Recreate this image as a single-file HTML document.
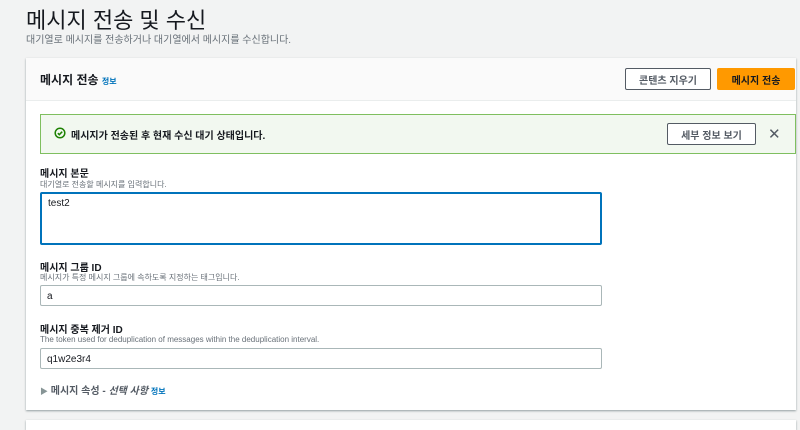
<!DOCTYPE html>
<html><head><meta charset="utf-8"><style>
*{box-sizing:border-box;margin:0;padding:0}
body{width:800px;height:425px;overflow:hidden;background:#f2f3f3;font-family:"Liberation Sans","Noto Sans CJK KR",sans-serif;color:#16191f;position:relative}
.a{position:absolute}
h1{position:absolute;left:26px;top:3px;font-size:22px;font-weight:400;color:#16191f}
.sub{left:26px;top:31px;font-size:10px;color:#687078}
.card{left:26px;top:58px;width:770px;height:352px;background:#fff;box-shadow:0 1px 2px rgba(0,28,36,.4)}
.hdr{left:26px;top:58px;width:770px;height:43px;background:#fafafa;border-bottom:1px solid #eaeded}
.btn{position:absolute;height:22px;font-size:10px;font-weight:700;display:flex;align-items:center;justify-content:center;border:1px solid #545b64;background:#fff;color:#545b64;border-radius:2px}
.lbl{position:absolute;left:40px;font-size:10px;font-weight:700;color:#16191f}
.desc{position:absolute;left:40px;font-size:8px;color:#687078}
.inp{position:absolute;left:40px;width:562px;height:21px;border:1px solid #aab7b8;border-radius:2px;font-size:10px;padding:3px 6px;color:#16191f}
.info{color:#0073bb;font-size:8px;font-weight:700}
</style></head><body>
<h1>메시지 전송 및 수신</h1>
<div class="a sub">대기열로 메시지를 전송하거나 대기열에서 메시지를 수신합니다.</div>
<div class="a card"></div>
<div class="a hdr"></div>
<div class="a" style="left:40px;top:71px;font-size:12px;font-weight:700">메시지 전송 <span class="info">정보</span></div>
<div class="btn" style="left:625px;top:68px;width:86px">콘텐츠 지우기</div>
<div class="btn" style="left:717px;top:68px;width:78px;background:#ff9900;border-color:#ff9900;color:#16191f">메시지 전송</div>
<div class="a" style="left:40px;top:114px;width:756px;height:40px;background:#f2f8f0;border:1px solid #7fbf5f"></div>
<svg class="a" style="left:54px;top:127px" width="12" height="12" viewBox="0 0 12 12"><circle cx="6" cy="6" r="4.8" fill="none" stroke="#1d8102" stroke-width="1.5"/><path d="M3.8 6.2l1.5 1.5 2.9-3" fill="none" stroke="#1d8102" stroke-width="1.5"/></svg>
<div class="a" style="left:71px;top:127px;font-size:10px;font-weight:700">메시지가 전송된 후 현재 수신 대기 상태입니다.</div>
<div class="btn" style="left:667px;top:123px;width:89px">세부 정보 보기</div>
<div class="a" style="left:768px;top:125px;font-size:15px;color:#545b64">✕</div>
<div class="lbl" style="top:165px">메시지 본문</div>
<div class="desc" style="top:179px">대기열로 전송할 메시지를 입력합니다.</div>
<div class="inp" style="top:192px;height:53px;border:2px solid #0073bb;padding:4px 6px">test2</div>
<div class="lbl" style="top:259px">메시지 그룹 ID</div>
<div class="desc" style="top:272px">메시지가 특정 메시지 그룹에 속하도록 지정하는 태그입니다.</div>
<div class="inp" style="top:285px;padding-top:5px">a</div>
<div class="lbl" style="top:321px">메시지 중복 제거 ID</div>
<div class="desc" style="top:335px">The token used for deduplication of messages within the deduplication interval.</div>
<div class="inp" style="top:348px;padding-top:5px">q1w2e3r4</div>
<div class="a" style="left:40px;top:382px;font-size:10px;font-weight:700;color:#545b64"><span style="font-size:8px;color:#879596">▶</span> 메시지 속성 - <i>선택 사항</i> <span class="info">정보</span></div>
<div class="a" style="left:26px;top:420px;width:770px;height:10px;background:#fff;box-shadow:0 1px 2px rgba(0,28,36,.4)"></div>
</body></html>
